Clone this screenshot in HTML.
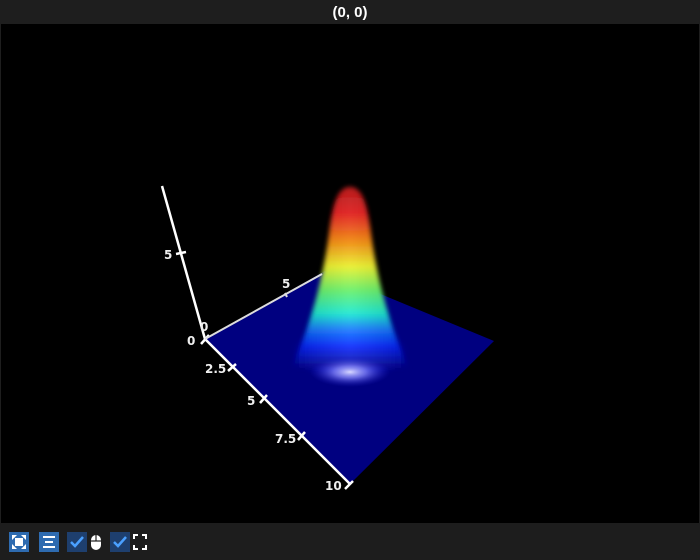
<!DOCTYPE html>
<html><head><style>
body{margin:0;width:700px;height:560px;background:#1e1e1e;overflow:hidden;font-family:"Liberation Sans",sans-serif}
#title{position:absolute;left:0;top:0;width:700px;height:24px;color:#fff;font-weight:bold;font-size:15px;text-align:center;line-height:26px}
#plot{position:absolute;left:1px;top:24px;width:698px;height:499px;background:#000}
#bar{position:absolute;left:0;top:523px;width:700px;height:37px;background:#1d1d1d}
.b{position:absolute;top:9px;width:20px;height:20px}
</style></head><body>
<div id="title">(0, 0)</div>
<div id="plot"></div>
<svg style="position:absolute;left:0;top:0" width="700" height="523">
<defs>
<linearGradient id="g" x1="0" y1="187" x2="0" y2="368" gradientUnits="userSpaceOnUse">
<stop offset="0" stop-color="#a00"/>
<stop offset="0.15" stop-color="#e01010"/>
<stop offset="0.3" stop-color="#f08000"/>
<stop offset="0.44" stop-color="#e8f020"/>
<stop offset="0.57" stop-color="#60f060"/>
<stop offset="0.7" stop-color="#10e8d0"/>
<stop offset="0.79" stop-color="#0870ff"/>
<stop offset="0.88" stop-color="#0020ff"/>
<stop offset="1" stop-color="#000090"/>
</linearGradient>
<linearGradient id="h" x1="0" x2="1" y1="0" y2="0">
<stop offset="0" stop-color="#000" stop-opacity="0.15"/>
<stop offset="0.5" stop-color="#fff" stop-opacity="0.12"/>
<stop offset="1" stop-color="#000" stop-opacity="0.15"/>
</linearGradient>
<radialGradient id="gl" cx="0.5" cy="0.5" r="0.5">
<stop offset="0" stop-color="#d8d8ff"/>
<stop offset="0.4" stop-color="#9090ff" stop-opacity="0.7"/>
<stop offset="1" stop-color="#2020d0" stop-opacity="0"/>
</radialGradient>
<radialGradient id="bb" cx="0.5" cy="0.5" r="0.5">
<stop offset="0" stop-color="#0028ff"/>
<stop offset="0.6" stop-color="#0010e0" stop-opacity="0.7"/>
<stop offset="1" stop-color="#000080" stop-opacity="0"/>
</radialGradient>
<filter id="f" x="-20%" y="-20%" width="140%" height="140%"><feGaussianBlur stdDeviation="2.5"/></filter>
</defs>
<polygon points="205,339 325,271 494,341 350,484" fill="#000080"/>
<ellipse cx="350" cy="352" rx="62" ry="32" fill="url(#bb)"/>
<path d="M350,187 C337,187 333,207 330,227 C325,267 316,312 292,368 L408,368 C384,312 375,267 370,227 C367,207 363,187 350,187Z" fill="url(#g)" filter="url(#f)"/>
<path d="M350,187 C337,187 333,207 330,227 C325,267 316,312 292,368 L408,368 C384,312 375,267 370,227 C367,207 363,187 350,187Z" fill="url(#h)" filter="url(#f)"/>
<ellipse cx="350" cy="372" rx="40" ry="15" fill="url(#gl)"/>
<g stroke="#fff" stroke-width="2.5" fill="none">
<line x1="162" y1="186" x2="205" y2="339"/>
<line x1="205" y1="339" x2="350" y2="484"/>
<line x1="176" y1="254" x2="186" y2="252"/>
<line x1="228" y1="371" x2="236" y2="364"/>
<line x1="260" y1="403" x2="267" y2="395"/>
<line x1="298" y1="440" x2="305" y2="432"/>
<line x1="345" y1="489" x2="353" y2="481"/>
<line x1="201" y1="344" x2="209" y2="335"/>
</g>
<line x1="205" y1="339" x2="322" y2="274" stroke="#ddd" stroke-width="2"/>
<line x1="285" y1="293" x2="287" y2="297" stroke="#ddd" stroke-width="2"/>
<g fill="#eee" font-size="12" font-weight="bold" font-family="DejaVu Sans,sans-serif">
<text x="164" y="259">5</text>
<text x="187" y="345">0</text>
<text x="200" y="331">0</text>
<text x="282" y="288">5</text>
<text x="205" y="373">2.5</text>
<text x="247" y="405">5</text>
<text x="275" y="443">7.5</text>
<text x="325" y="490">10</text>
</g>
</svg>
<div id="bar">
<svg class="b" style="left:9px;background:#2e6bb0" viewBox="0 0 20 20"><g fill="#fff"><rect x="6" y="6" width="8" height="8"/><path d="M3,3h5l-5,5zM17,3v5l-5-5zM3,17v-5l5,5zM17,17h-5l5-5z"/></g></svg>
<svg class="b" style="left:39px;background:#2e6bb0" viewBox="0 0 20 20"><g fill="#fff"><rect x="4" y="4" width="12" height="2"/><rect x="6" y="9" width="8" height="2"/><rect x="4" y="14" width="12" height="2"/></g></svg>
<svg class="b" style="left:67px;background:#1e3f6e" viewBox="0 0 20 20"><path d="M4,10l4,4l8-9" stroke="#4aa0ff" stroke-width="2.5" fill="none"/></svg>
<svg class="b" style="left:89px;width:14px" viewBox="0 0 14 20"><rect x="2" y="3" width="10" height="15" rx="5" fill="#fff"/><line x1="7" y1="3" x2="7" y2="9" stroke="#1d1d1d" stroke-width="1.2"/><line x1="2" y1="9" x2="12" y2="9" stroke="#1d1d1d" stroke-width="1.2"/></svg>
<svg class="b" style="left:110px;background:#1e3f6e" viewBox="0 0 20 20"><path d="M4,10l4,4l8-9" stroke="#4aa0ff" stroke-width="2.5" fill="none"/></svg>
<svg class="b" style="left:132px;width:16px" viewBox="0 0 16 20"><path d="M2,7V3h4M10,3h4v4M14,13v4h-4M6,17H2v-4" stroke="#fff" stroke-width="2" fill="none"/></svg>
</div>
</body></html>
